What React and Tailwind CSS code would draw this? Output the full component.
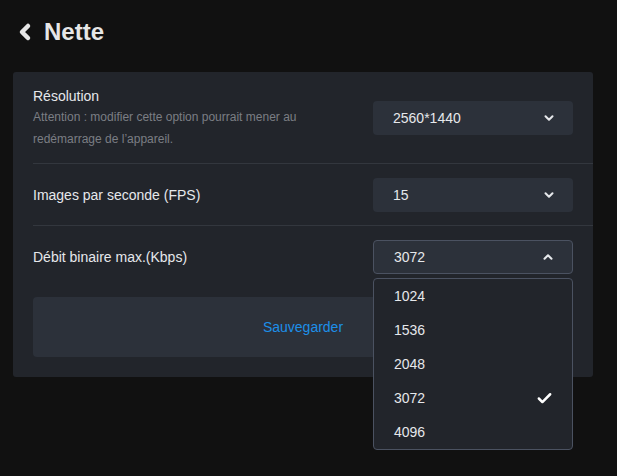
import React from 'react';
import { ChevronDown, ChevronUp, ChevronLeft, Check } from 'lucide-react';

const options = ['1024', '1536', '2048', '3072', '4096'];

const Select = ({ value, open }) => (
  <div
    className={`flex h-[34px] w-[200px] items-center justify-between rounded-[4px] bg-[#2c313a] pl-5 pr-[17px] text-[14px] text-[#e6e8eb] ${
      open ? 'border border-[#4b5261]' : ''
    }`}
  >
    <span>{value}</span>
    {open ? (
      <ChevronUp size={14} strokeWidth={3.5} className="text-[#e6e8eb]" />
    ) : (
      <ChevronDown size={14} strokeWidth={3.5} className="text-[#e6e8eb]" />
    )}
  </div>
);

const App = () => {
  return (
    <div
      className="min-h-[476px] w-full bg-[#111111] px-[13px] pt-[18px]"
      style={{ fontFamily: '"Liberation Sans", Arial, sans-serif' }}
    >
      <header className="flex h-[28px] items-center gap-[7px]">
        <ChevronLeft size={24} strokeWidth={4.5} className="text-[#e6e6e6]" />
        <h1 className="text-[24px] font-bold text-[#e6e6e6]">Nette</h1>
      </header>

      <section className="mt-[26px] w-[580px] rounded-[3px] bg-[#22252b] pb-5 pl-5">
        {/* Résolution */}
        <div className="flex items-center justify-between border-b border-[#33373e] pb-[13px] pt-[14px] pr-5">
          <div>
            <p className="text-[14px] leading-[20px] text-[#e6e8eb]">Résolution</p>
            <p className="w-[300px] text-[12px] leading-[22px] text-[#7b7e84]">
              Attention : modifier cette option pourrait mener au redémarrage de l’appareil.
            </p>
          </div>
          <Select value="2560*1440" />
        </div>

        {/* FPS */}
        <div className="flex items-center justify-between border-b border-[#33373e] pb-[13px] pt-[14px] pr-5">
          <p className="text-[14px] text-[#e6e8eb]">Images par seconde (FPS)</p>
          <Select value="15" />
        </div>

        {/* Bitrate */}
        <div className="flex items-center justify-between pb-[13px] pt-[14px] pr-5">
          <p className="text-[14px] text-[#e6e8eb]">Débit binaire max.(Kbps)</p>
          <div className="relative">
            <Select value="3072" open />
            <ul className="absolute left-0 top-[38px] z-10 w-[200px] rounded-[4px] border border-[#4b5261] bg-[#22252b]">
              {options.map((o) => (
                <li
                  key={o}
                  className="flex h-[34px] items-center justify-between pl-5 pr-[19px] text-[14px] text-[#e6e8eb]"
                >
                  <span>{o}</span>
                  {o === '3072' && <Check size={17} strokeWidth={3.5} className="text-white" />}
                </li>
              ))}
            </ul>
          </div>
        </div>

        <div className="mr-5 mt-[10px] flex h-[60px] items-center justify-center rounded-[4px] bg-[#2c313a]">
          <span className="text-[14px] text-[#1d8fe8]">Sauvegarder</span>
        </div>
      </section>
    </div>
  );
};

export default App;
